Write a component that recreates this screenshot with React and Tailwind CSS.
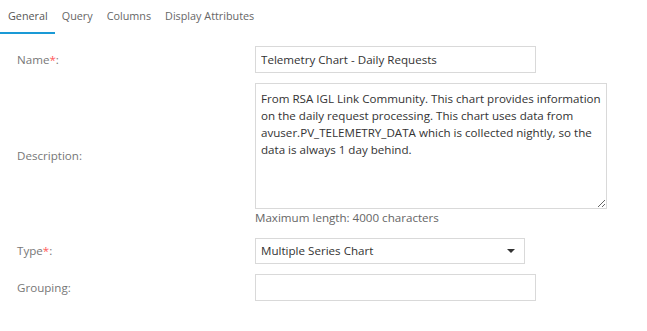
import { useState } from "react"

const tabs = ["General", "Query", "Columns", "Display Attributes"]

const Label = ({ children, required }) => (
  <div className="w-[255px] shrink-0 pl-[17px] text-[11.6px] text-[#777]">
    {children}
    {required && <span className="text-[#ff5a5a]">*</span>}:
  </div>
)

export default function App() {
  const [active] = useState(0)

  return (
    <div className="w-[647px] h-[331px] bg-white font-['Open_Sans',sans-serif] overflow-hidden">
      {/* Tabs */}
      <div className="flex h-[34px] items-stretch">
        {tabs.map((t, i) => (
          <div
            key={t}
            className={`flex items-center px-[7px] text-[10.8px] border-b-2 ${
              i === active ? "pl-[8px] border-[#1a9ad6] text-[#555]" : "text-[#666] border-transparent"
            }`}
          >
            {t}
          </div>
        ))}
      </div>

      {/* Form */}
      <div className="flex flex-col">
        <div className="flex items-center mt-[12px]">
          <Label required>Name</Label>
          <input
            readOnly
            value="Telemetry Chart - Daily Requests"
            className="w-[281px] h-[27px] border border-[#d9d9d9] px-[5px] text-[11.6px] text-[#333] outline-none"
          />
        </div>

        <div className="flex items-center mt-[10px]">
          <div className="pt-[3px]">
            <Label>Description</Label>
          </div>
          <div>
            <textarea
              readOnly
              value="From RSA IGL Link Community. This chart provides information on the daily request processing. This chart uses data from avuser.PV_TELEMETRY_DATA which is collected nightly, so the data is always 1 day behind."
              className="block w-[352px] h-[126px] border border-[#d9d9d9] px-[5px] py-[6px] text-[11.6px] leading-[17px] text-[#333] outline-none resize-y"
            />
            <div className="text-[11.6px] text-[#666] leading-[16px] mt-[1px]">Maximum length: 4000 characters</div>
          </div>
        </div>

        <div className="flex items-center mt-[12px]">
          <Label required>Type</Label>
          <div className="w-[270px] h-[26px] border border-[#d9d9d9] flex items-center justify-between pl-[5px] pr-[9px] text-[11.6px] text-[#333]">
            <span>Multiple Series Chart</span>
            <span className="w-0 h-0 border-l-[4px] border-r-[4px] border-t-[4px] border-l-transparent border-r-transparent border-t-[#333]" />
          </div>
        </div>

        <div className="flex items-center mt-[10px]">
          <Label>Grouping</Label>
          <input
            readOnly
            value=""
            className="w-[281px] h-[27px] border border-[#d9d9d9] px-[5px] text-[11.6px] text-[#333] outline-none"
          />
        </div>
      </div>
    </div>
  )
}
